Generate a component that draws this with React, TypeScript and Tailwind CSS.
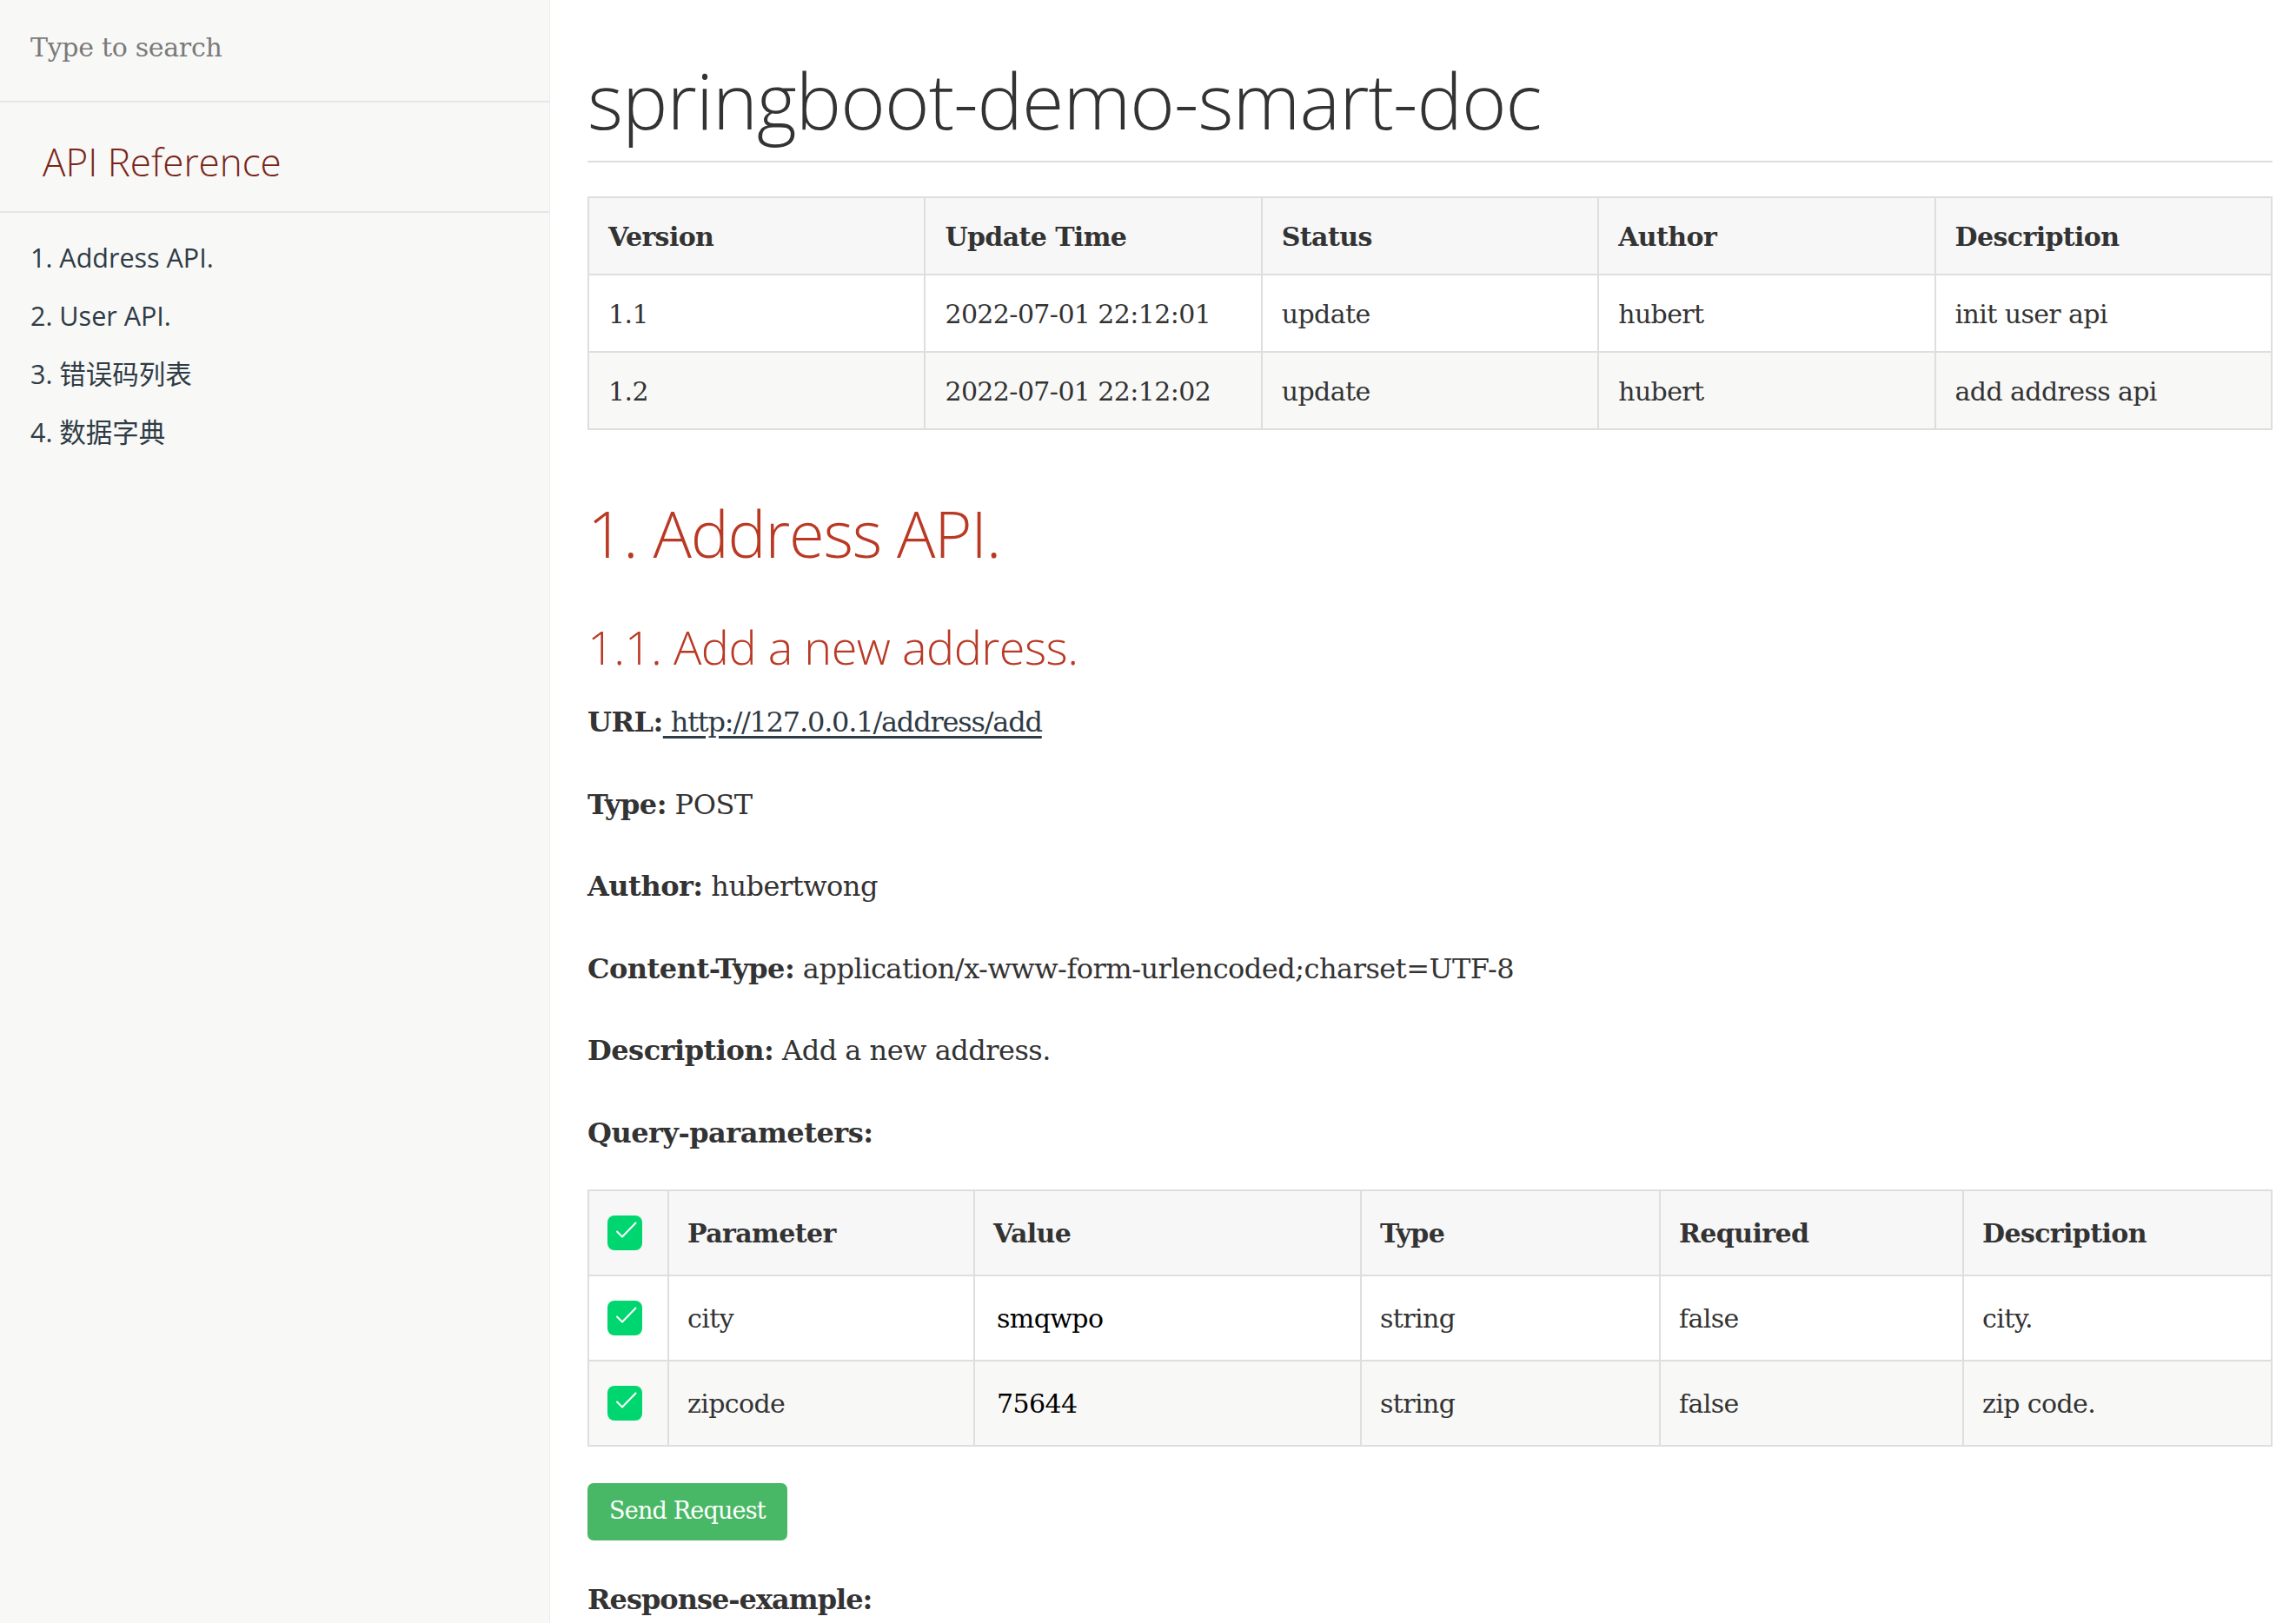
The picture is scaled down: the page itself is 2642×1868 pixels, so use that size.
import React from "react";

const SERIF = "font-['DejaVu_Serif',serif]";
const SANS = "font-['Open_Sans',sans-serif]";

function Check() {
  return (
    <span className="flex h-[40px] w-[40px] items-center justify-center rounded-[8px] bg-[#00d66f]">
      <svg width="40" height="40" viewBox="0 0 40 40">
        <polyline
          points="11,18.5 17,24.5 32.5,8.5"
          fill="none"
          stroke="white"
          strokeWidth="2"
          strokeLinecap="round"
          strokeLinejoin="round"
        />
      </svg>
    </span>
  );
}

const versions = [
  ["1.1", "2022-07-01 22:12:01", "update", "hubert", "init user api"],
  ["1.2", "2022-07-01 22:12:02", "update", "hubert", "add address api"],
];

const params = [
  ["city", "smqwpo", "string", "false", "city."],
  ["zipcode", "75644", "string", "false", "zip code."],
];

const toc = ["1. Address API.", "2. User API.", "3. 错误码列表", "4. 数据字典"];

export default function App() {
  return (
    <div className="flex h-[1868px] w-full overflow-hidden bg-white text-[#333333]">
      {/* Sidebar */}
      <aside className="flex w-[633px] shrink-0 flex-col border-r border-[#ececec] bg-[#f8f8f7]">
        <div className="h-[118px] shrink-0 border-b-2 border-[#e6e6e6]">
          <div
            className={`flex h-[108px] items-center pl-[35px] text-[30px] tracking-[-0.3px] text-[#7a7a7a] ${SERIF}`}
          >
            Type to search
          </div>
        </div>
        <div className="flex h-[127px] shrink-0 items-center border-b-2 border-[#e6e6e6] pl-[49px] pt-[10px]">
          <span className={`text-[44px] font-light text-[#7a2518] ${SANS}`}>API Reference</span>
        </div>
        <ul className="shrink-0 pt-[18px] font-['Open_Sans','Noto_Sans_CJK_SC',sans-serif]">
          {toc.map((t) => (
            <li key={t} className="flex h-[67px] items-center pl-[35px] text-[30.5px] text-[#2f3b45]">
              {t}
            </li>
          ))}
        </ul>
      </aside>

      {/* Main */}
      <main className="flex min-w-0 flex-1 flex-col overflow-hidden pl-[43px] pr-[27px]">
        <div className="flex h-[187px] shrink-0 items-center border-b-2 border-[#dddddf] pt-[45px]">
          <h1 className={`text-[88px] font-light leading-none tracking-[-0.9px] text-[#333333] ${SANS}`}>
            springboot-demo-smart-doc
          </h1>
        </div>

        <table
          className={`mt-[39px] w-full shrink-0 table-fixed border-collapse border-2 border-[#dedede] text-[30px] tracking-[-0.6px] ${SERIF}`}
        >
          <thead>
            <tr className="h-[89px] bg-[#f7f7f8]">
              {["Version", "Update Time", "Status", "Author", "Description"].map((h) => (
                <th key={h} className="border-2 border-[#dedede] px-[22px] pt-[2px] text-left font-bold">
                  {h}
                </th>
              ))}
            </tr>
          </thead>
          <tbody>
            {versions.map((r, i) => (
              <tr key={i} className={`h-[89px] ${i % 2 === 1 ? "bg-[#f8f8f7]" : "bg-white"}`}>
                {r.map((c, j) => (
                  <td key={j} className="border-2 border-[#dedede] px-[22px] pt-[2px]">
                    {c}
                  </td>
                ))}
              </tr>
            ))}
          </tbody>
        </table>

        <div className="mt-[75px] flex h-[88px] shrink-0 items-center">
          <h2 className={`text-[74px] font-light leading-none tracking-[-1.2px] text-[#ba3925] ${SANS}`}>
            1. Address API.
          </h2>
        </div>
        <div className="mt-[54px] flex h-[64px] shrink-0 items-center">
          <h3 className={`text-[54px] font-light leading-none tracking-[-0.5px] text-[#ba3925] ${SANS}`}>
            1.1. Add a new address.
          </h3>
        </div>

        <div className={`shrink-0 text-[32px] tracking-[-0.5px] ${SERIF}`}>
          <p className="mt-[28px] flex h-[54px] items-center whitespace-pre">
            <strong>URL:</strong>
            <a className="tracking-[-1.2px] text-[#2e3a44] underline underline-offset-[5px]" href="#">
              {" http://127.0.0.1/address/add"}
            </a>
          </p>
          <p className="mt-[40.5px] flex h-[54px] items-center whitespace-pre">
            <strong>Type:</strong> POST
          </p>
          <p className="mt-[40.5px] flex h-[54px] items-center whitespace-pre">
            <strong>Author:</strong> hubertwong
          </p>
          <p className="mt-[40.5px] flex h-[54px] items-center whitespace-pre">
            <strong>Content-Type:</strong> application/x-www-form-urlencoded;charset=UTF-8
          </p>
          <p className="mt-[40.5px] flex h-[54px] items-center whitespace-pre">
            <strong>Description:</strong> Add a new address.
          </p>
          <p className="mt-[40.5px] flex h-[54px] items-center whitespace-pre">
            <strong>Query-parameters:</strong>
          </p>
        </div>

        <table
          className={`mt-[38px] w-full shrink-0 table-fixed border-collapse border-2 border-[#dedede] text-[30px] tracking-[-0.6px] ${SERIF}`}
        >
          <colgroup>
            <col className="w-[92px]" />
            <col className="w-[352px]" />
            <col className="w-[445px]" />
            <col className="w-[344px]" />
            <col className="w-[349px]" />
            <col />
          </colgroup>
          <thead>
            <tr className="h-[98px] bg-[#f7f7f8]">
              <th className="border-2 border-[#dedede] pl-[21px] text-left">
                <Check />
              </th>
              {["Parameter", "Value", "Type", "Required", "Description"].map((h) => (
                <th key={h} className="border-2 border-[#dedede] px-[21px] pt-[2px] text-left font-bold">
                  {h}
                </th>
              ))}
            </tr>
          </thead>
          <tbody>
            {params.map((r, i) => (
              <tr key={i} className={`h-[98px] ${i % 2 === 1 ? "bg-[#f8f8f7]" : "bg-white"}`}>
                <td className="border-2 border-[#dedede] pl-[21px]">
                  <Check />
                </td>
                {r.map((c, j) => (
                  <td
                    key={j}
                    className={`border-2 border-[#dedede] px-[21px] pt-[2px] ${j === 1 ? "pl-[25px] text-black" : ""}`}
                  >
                    {c}
                  </td>
                ))}
              </tr>
            ))}
          </tbody>
        </table>

        <div className="mt-[42px] shrink-0">
          <button
            className={`flex h-[66px] w-[230px] items-center rounded-[7px] bg-[#49b866] pl-[25px] text-[27px] tracking-[-0.8px] text-white ${SERIF}`}
          >
            Send Request
          </button>
        </div>

        <p
          className={`mt-[41px] flex h-[54px] shrink-0 items-center text-[32px] font-bold tracking-[-1px] ${SERIF}`}
        >
          Response-example:
        </p>
      </main>
    </div>
  );
}
